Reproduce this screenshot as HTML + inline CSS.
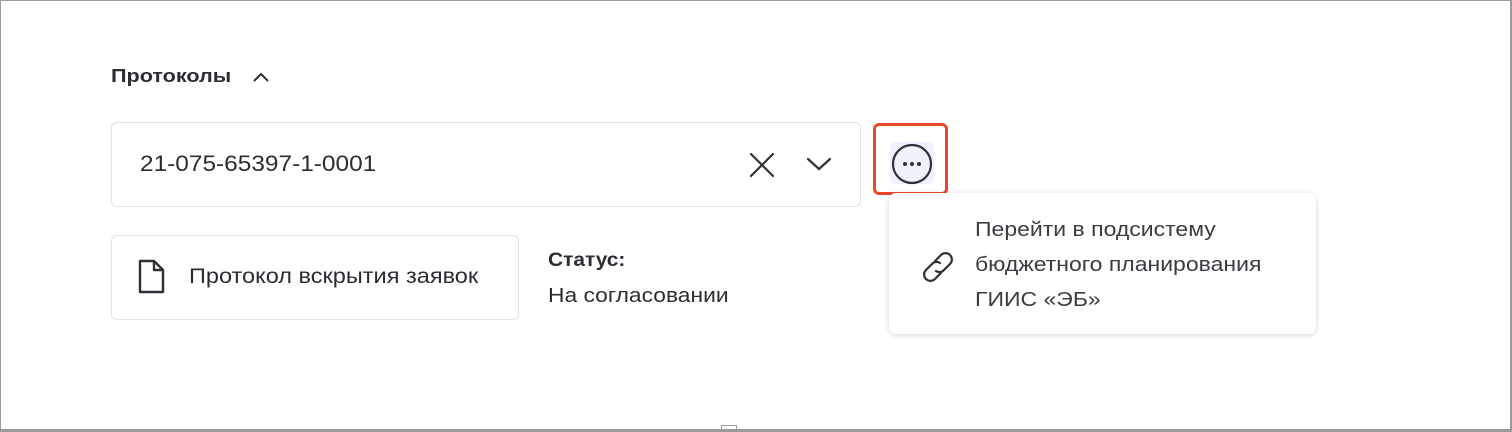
<!DOCTYPE html>
<html><head><meta charset="utf-8"><style>
*{box-sizing:border-box;margin:0;padding:0}
body{width:1512px;height:432px;position:relative;background:#fff;font-family:"Liberation Sans","DejaVu Sans",sans-serif;color:#2b2d33;overflow:hidden}
.frame{position:absolute;left:0;top:0;width:1512px;height:432px;border-top:1px solid #9a9a9a;border-left:1px solid #9a9a9a;border-right:2px solid #9a9a9a;border-bottom:3px solid #9a9a9a}
.abs{position:absolute;white-space:nowrap;transform-origin:0 0}
.title{left:111px;top:66px;font-size:18px;font-weight:bold;color:#2b2d33;transform:scaleX(1.2)}
.field{left:111px;top:122px;width:750px;height:85px;border:1px solid #dfe2e7;border-radius:6px}
.val{left:140px;top:151px;font-size:22px;color:#2b2d33;transform:scaleX(1.11)}
.btn{left:111px;top:235px;width:408px;height:85px;border:1px solid #dfe2e7;border-radius:6px}
.btxt{left:189px;top:265px;font-size:21px;color:#2b2d33;transform:scaleX(1.12)}
.st1{left:548px;top:250px;font-size:19px;font-weight:bold;transform:scaleX(1.1)}
.st2{left:548px;top:285px;font-size:20px;transform:scaleX(1.14)}
.hl{left:873px;top:123px;width:75px;height:72px;border:3px solid #e8492b;border-radius:6px}
.ibg{left:890px;top:142px;width:44px;height:42px;background:#eef3fb;border-radius:6px}
.menu{left:889px;top:193px;width:427px;height:141px;background:#fff;border-radius:7px;box-shadow:0 1px 6px rgba(0,0,0,.18)}
.mtxt{left:975px;top:213px;font-size:20px;line-height:35px;color:#3a3c42;transform:scaleX(1.15)}
</style></head><body>
<div class="abs title">Протоколы</div>
<svg class="abs" style="left:252px;top:70px" width="18" height="14" viewBox="0 0 18 14"><path d="M2 11 L9 4 L16 11" fill="none" stroke="#2b2d33" stroke-width="2"/></svg>
<div class="abs field"></div>
<div class="abs val">21-075-65397-1-0001</div>
<svg class="abs" style="left:748px;top:151px" width="28" height="28" viewBox="0 0 28 28"><path d="M3 3 L25 25 M25 3 L3 25" stroke="#2f3138" stroke-width="2.2" stroke-linecap="round"/></svg>
<svg class="abs" style="left:805px;top:155px" width="28" height="18" viewBox="0 0 28 18"><path d="M3 4 L14 14 L25 4" fill="none" stroke="#2f3138" stroke-width="2.2" stroke-linecap="round"/></svg>
<div class="abs btn"></div>
<svg class="abs" style="left:137px;top:258px" width="30" height="38" viewBox="0 0 30 38"><path d="M3 3 H17 L26 12 V34 H3 Z M17 3 V12 H26" fill="none" stroke="#2f3138" stroke-width="2.4" stroke-linejoin="round"/></svg>
<div class="abs btxt">Протокол вскрытия заявок</div>
<div class="abs st1">Статус:</div>
<div class="abs st2">На согласовании</div>
<div class="abs hl"></div>
<div class="abs ibg"></div>
<svg class="abs" style="left:890px;top:142px" width="44" height="44" viewBox="0 0 44 44"><circle cx="22" cy="22" r="19" fill="none" stroke="#2f3138" stroke-width="2.2"/><circle cx="15" cy="22" r="2" fill="#2f3138"/><circle cx="22" cy="22" r="2" fill="#2f3138"/><circle cx="29" cy="22" r="2" fill="#2f3138"/></svg>
<div class="abs menu"></div>
<svg class="abs" style="left:918px;top:247px" width="40" height="40" viewBox="0 0 40 40"><g fill="none" stroke="#2f3138" stroke-width="2.2" stroke-linecap="round"><path d="M17 14 L23 8 A6 6 0 0 1 32 17 L26 23 A6 6 0 0 1 18 24"/><path d="M23 26 L17 32 A6 6 0 0 1 8 23 L14 17 A6 6 0 0 1 22 16"/></g></svg>
<div class="abs mtxt">Перейти в подсистему<br>бюджетного планирования<br>ГИИС «ЭБ»</div>
<div class="abs" style="left:721px;top:425px;width:16px;height:5px;border:1px solid #9a9a9a;border-bottom:none;background:#fff"></div>
<div class="frame"></div>
</body></html>
